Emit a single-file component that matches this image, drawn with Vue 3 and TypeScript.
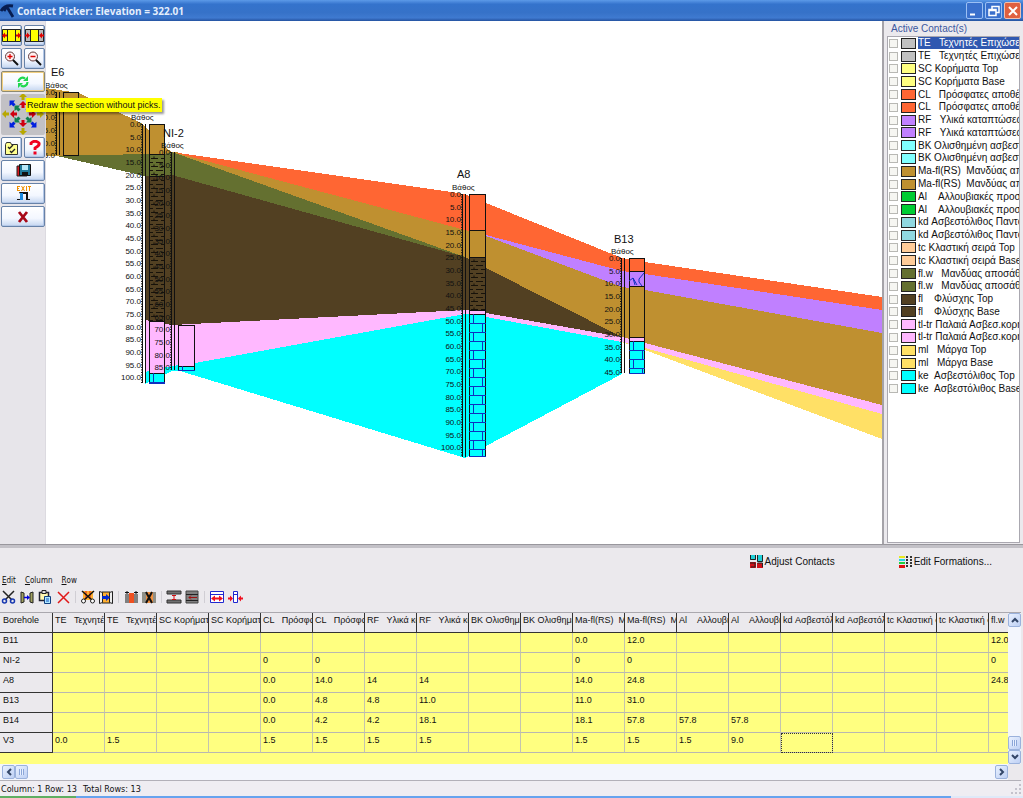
<script setup lang="ts">
interface Formation { label: string; color: string }
interface Hole {
  name: string; nameX: number; nameY: number
  depthX: number; x: number; top: number; bottom: number; last: number
}
interface Layer { x: number; y: number; w: number; h: number; fill: string; kind: string }

const formations: Formation[] = [
  { label: 'TE   Τεχνητές Επιχώσεις Top', color: '#c0c0c0' },
  { label: 'TE   Τεχνητές Επιχώσεις Base', color: '#c0c0c0' },
  { label: 'SC Κορήματα Top', color: '#ffff80' },
  { label: 'SC Κορήματα Base', color: '#ffff80' },
  { label: 'CL   Πρόσφατες αποθέσεις Top', color: '#ff6633' },
  { label: 'CL   Πρόσφατες αποθέσεις Base', color: '#ff6633' },
  { label: 'RF   Υλικά καταπτώσεων Top', color: '#c080ff' },
  { label: 'RF   Υλικά καταπτώσεων Base', color: '#c080ff' },
  { label: 'BK Ολισθημένη ασβεστολιθική Top', color: '#80ffff' },
  { label: 'BK Ολισθημένη ασβεστολιθική Base', color: '#80ffff' },
  { label: 'Ma-fl(RS)  Μανδύας αποσάθρωσης Top', color: '#bf9030' },
  { label: 'Ma-fl(RS)  Μανδύας αποσάθρωσης Base', color: '#bf9030' },
  { label: 'Al    Αλλουβιακές προσχώσεις Top', color: '#00cc33' },
  { label: 'Al    Αλλουβιακές προσχώσεις Base', color: '#00cc33' },
  { label: 'kd Ασβεστόλιθος Παντοκράτορα Top', color: '#90d8e0' },
  { label: 'kd Ασβεστόλιθος Παντοκράτορα Base', color: '#90d8e0' },
  { label: 'tc Κλαστική σειρά Top', color: '#ffcc99' },
  { label: 'tc Κλαστική σειρά Base', color: '#ffcc99' },
  { label: 'fl.w   Μανδύας αποσάθρωσης Top', color: '#647030' },
  { label: 'fl.w   Μανδύας αποσάθρωσης Base', color: '#647030' },
  { label: 'fl    Φλύσχης Top', color: '#524022' },
  { label: 'fl    Φλύσχης Base', color: '#524022' },
  { label: 'tl-tr Παλαιά Ασβεσ.κορήματα Top', color: '#ffb8ff' },
  { label: 'tl-tr Παλαιά Ασβεσ.κορήματα Base', color: '#ffb8ff' },
  { label: 'ml   Μάργα Top', color: '#ffe066' },
  { label: 'ml   Μάργα Base', color: '#ffe066' },
  { label: 'ke  Ασβεστόλιθος Top', color: '#00ffff' },
  { label: 'ke  Ασβεστόλιθος Base', color: '#00ffff' },
]
const headers = formations.slice(0, 19).map(f => f.label)

const rows: { id: string; v: Record<number, string> }[] = [
  { id: 'B11', v: { 10: '0.0', 11: '12.0', 18: '12.0' } },
  { id: 'NI-2', v: { 4: '0', 5: '0', 10: '0', 11: '0', 18: '0' } },
  { id: 'A8', v: { 4: '0.0', 5: '14.0', 6: '14', 7: '14', 10: '14.0', 11: '24.8', 18: '24.8' } },
  { id: 'B13', v: { 4: '0.0', 5: '4.8', 6: '4.8', 7: '11.0', 10: '11.0', 11: '31.0' } },
  { id: 'B14', v: { 4: '0.0', 5: '4.2', 6: '4.2', 7: '18.1', 10: '18.1', 11: '57.8', 12: '57.8', 13: '57.8' } },
  { id: 'V3', v: { 0: '0.0', 1: '1.5', 4: '1.5', 5: '1.5', 6: '1.5', 7: '1.5', 10: '1.5', 11: '1.5', 12: '1.5', 13: '9.0' } },
]

const bands = [
  { fill: '#bf9030', pts: '46,88 79,93 143,124 166,148 172,152 176,152 465,230 486,236 622,287 645,290 882,333 882,405 645,343 622,337 486,268 465,257 172,152 165,154 57,156 46,156' },
  { fill: '#ff6633', pts: '172,152 465,194 486,203 622,258 645,262 882,297 882,310 645,274 622,271 486,235 465,230 176,153' },
  { fill: '#c080ff', pts: '486,235 622,271 645,274 882,310 882,333 645,290 622,287 486,236' },
  { fill: '#647030', pts: '57,156 145,154 165,154 172,152 465,257 465,258 172,175 145,176' },
  { fill: '#524022', pts: '145,176 172,175 465,257 486,268 622,337 486,313 465,310 172,325 145,320' },
  { fill: '#ffb8ff', pts: '145,320 172,325 465,310 486,313 622,337 645,343 882,405 882,414 645,348 622,342 486,317 465,314 195,363 172,366 145,372' },
  { fill: '#00ffff', pts: '145,372 172,366 195,363 465,314 486,317 622,342 622,374 486,446 465,458 180,371 172,371 145,384' },
  { fill: '#ffe066', pts: '622,342 645,348 882,414 882,439 645,350' },
]

const holes: Hole[] = [
  { name: 'E6', nameX: 51, nameY: 76, depthX: 45, x: 56, top: 92, bottom: 155, last: 25 },
  { name: '', nameX: 0, nameY: 0, depthX: 131, x: 142, top: 124, bottom: 383, last: 100 },
  { name: 'NI-2', nameX: 163, nameY: 137, depthX: 161, x: 171, top: 152, bottom: 370, last: 85 },
  { name: 'A8', nameX: 457, nameY: 178, depthX: 452, x: 462, top: 194, bottom: 457, last: 100 },
  { name: 'B13', nameX: 614, nameY: 243, depthX: 611, x: 621, top: 258, bottom: 373, last: 45 },
]
const pitch = 12.66
const marks = (h: Hole) =>
  Array.from({ length: h.last / 5 + 1 }, (_, i) => ({ y: Math.round(h.top + i * pitch), t: (i * 5).toFixed(1) }))

const layers: Layer[] = [
  { x: 63, y: 92, w: 16, h: 63, fill: '#bf9030', kind: '' },
  { x: 149, y: 124, w: 16, h: 30, fill: '#bf9030', kind: '' },
  { x: 149, y: 154, w: 16, h: 22, fill: '#647030', kind: 'dash' },
  { x: 149, y: 176, w: 16, h: 145, fill: '#524022', kind: 'dash' },
  { x: 149, y: 321, w: 16, h: 52, fill: '#ffb8ff', kind: '' },
  { x: 149, y: 373, w: 16, h: 10, fill: '#00ffff', kind: 'brick' },
  { x: 178, y: 325, w: 17, h: 41, fill: '#ffb8ff', kind: '' },
  { x: 178, y: 366, w: 17, h: 4, fill: '#00ffff', kind: 'brick' },
  { x: 469, y: 194, w: 17, h: 36, fill: '#ff6633', kind: '' },
  { x: 469, y: 230, w: 17, h: 27, fill: '#bf9030', kind: '' },
  { x: 469, y: 257, w: 17, h: 53, fill: '#524022', kind: 'dash' },
  { x: 469, y: 310, w: 17, h: 4, fill: '#ffb8ff', kind: '' },
  { x: 469, y: 314, w: 17, h: 142, fill: '#00ffff', kind: 'brick' },
  { x: 629, y: 258, w: 16, h: 13, fill: '#ff6633', kind: '' },
  { x: 629, y: 271, w: 16, h: 15, fill: '#c080ff', kind: 'crack' },
  { x: 629, y: 286, w: 16, h: 51, fill: '#bf9030', kind: '' },
  { x: 629, y: 337, w: 16, h: 4, fill: '#ffb8ff', kind: '' },
  { x: 629, y: 341, w: 16, h: 32, fill: '#00ffff', kind: 'brick' },
]
function texture(l: Layer): string {
  let d = ''
  if (l.kind === 'brick') {
    for (let y = 0, i = 0; y < l.h; y += 9, i++) {
      const end = Math.min(y + 9, l.h)
      const vx = l.x + (i % 2 ? 13 : 4) + 0.5
      d += `M${vx} ${l.y + y}V${l.y + end}`
      d += `M${l.x} ${l.y + end + 0.5}h${l.w}`
    }
  } else if (l.kind === 'dash') {
    for (let y = 4, i = 0; y < l.h; y += 4, i++) {
      const base = l.y + y + 0.5
      d += i % 2 ? `M${l.x + 1} ${base}h3m3 0h7` : `M${l.x + 2} ${base}h7m3 0h4M${l.x + 5} ${base - 2}v2`
    }
  } else if (l.kind === 'crack') {
    d = `M${l.x} ${l.y + 10}l4 -3l4 7M${l.x + 4} ${l.y + 7}l2 7M${l.x + 15} ${l.y + 2}l-5 6v3l3 4`
  }
  return d
}
const arrows = [
  { a: 0, c: '#b8a800', r: 14 }, { a: 90, c: '#b8a800', r: 14 }, { a: 180, c: '#b8a800', r: 14 }, { a: 270, c: '#b8a800', r: 14 },
  { a: 45, c: '#0020e0', r: 12 }, { a: 135, c: '#0020e0', r: 12 }, { a: 225, c: '#0020e0', r: 12 }, { a: 315, c: '#0020e0', r: 12 },
  { a: 0, c: '#d00010', r: 6 }, { a: 90, c: '#d00010', r: 6 }, { a: 180, c: '#d00010', r: 6 }, { a: 270, c: '#d00010', r: 6 },
  { a: 45, c: '#108050', r: 5 }, { a: 135, c: '#108050', r: 5 }, { a: 225, c: '#108050', r: 5 }, { a: 315, c: '#108050', r: 5 },
]
</script>

<template>
  <div class="window">
    <header class="titlebar">
      <svg class="logo" width="15" height="16" viewBox="0 0 15 16"><path d="M1 8C3 4 7 2 13 3M7 4l6 10M6 4.500 4 8" fill="none" stroke="#071d50" stroke-width="2.800" /></svg>
      <h1>Contact Picker: Elevation = 322.01</h1>
      <button class="cap" aria-label="Minimize"><svg width="16" height="16"><path d="M3 11.500h5" stroke="#fff" stroke-width="2" /></svg></button>
      <button class="cap" aria-label="Restore"><svg width="16" height="16"><path d="M6 6V3.500h7v6h-3M3 6.500h7v6H3zM3 7.500h7" fill="none" stroke="#fff" stroke-width="1.500" /></svg></button>
      <button class="cap close" aria-label="Close"><svg width="16" height="16"><path d="M4 4l8 8M12 4l-8 8" stroke="#fff" stroke-width="2" /></svg></button>
    </header>

    <main class="work">
      <nav class="tools">
        <button aria-label="Widen"><svg width="19" height="13"><path d="M0 0h19v13H0z" fill="#ff0" /><path d="M.5 .5h18v12H.5zM5.500 0v13M13.500 0v13" fill="none" stroke="#222" /><path d="M0 6.500l3-3v2h2v2H3v2zM19 6.500l-3-3v2h-2v2h2v2z" fill="#e00000" /></svg></button>
        <button aria-label="Narrow"><svg width="19" height="13"><path d="M0 0h19v13H0z" fill="#b8b8b8" /><path d="M6 0h7v13H6z" fill="#ff0" /><path d="M.5 .5h18v12H.5zM5.500 0v13M13.500 0v13" fill="none" stroke="#222" /><path d="M5 6.500l-3-3v2H0v2h2v2zM14 6.500l3-3v2h2v2h-2v2z" fill="#e00000" /></svg></button>
        <button aria-label="Zoom in"><svg width="15" height="15"><circle cx="6" cy="5.500" r="4.500" fill="#fff0f0" stroke="#603838" /><path d="M3.500 5.500h5M6 3v5" stroke="#d00" stroke-width="1.300" /><path d="M9 9l5 5" stroke="#111" stroke-width="2" /></svg></button>
        <button aria-label="Zoom out"><svg width="15" height="15"><circle cx="6" cy="5.500" r="4.500" fill="#fff0f0" stroke="#603838" /><path d="M3.500 5.500h5" stroke="#d00" stroke-width="1.300" /><path d="M9 9l5 5" stroke="#111" stroke-width="2" /></svg></button>
        <button class="wide hot" aria-label="Redraw"><svg width="14" height="14"><path d="M2.500 7C2.500 3.500 6 1.500 9 3.500M11.500 7c0 3.500-3.500 5.500-6.500 3.500" fill="none" stroke="#20d850" stroke-width="2.200" /><path d="M7 6h5V1zM7 8H2v5z" fill="#20d850" /></svg></button>
        <button class="wide pan" aria-label="Pan">
          <svg width="42" height="41" viewBox="-21 -20 42 41">
            <path v-for="(p, i) in arrows" :key="i" :d="`M-1.500 ${-p.r}h3v-3h2.500l-4-4-4 4h2.500z`" :transform="`rotate(${p.a})`" :fill="p.c" />
          </svg>
        </button>
        <button aria-label="Options"><svg width="13" height="14"><path d="M.5 3.500l1-2h4l1 2h6v10H.5z" fill="#ffff90" stroke="#333" /><path d="M3 6l1.500 1.500L8 4M5 10l1.500 1.500L10 8" fill="none" stroke="#222" stroke-width="1.300" /></svg></button>
        <button aria-label="Help"><svg width="12" height="15"><path d="M2 5V3q4-3.500 8 0 1 2.500-4 5v2" fill="none" stroke="#f00020" stroke-width="2.800" /><path d="M4.500 11.500h3v3h-3z" fill="#f00020" /></svg></button>
        <button class="wide" aria-label="Save"><svg width="15" height="13"><path d="M1 2h10v10H1z" fill="#d81820" stroke="#222" /><path d="M3.500 .5h11v11h-11z" fill="#207898" stroke="#111" /><path d="M6 1h6v5H6z" fill="#b8e8f8" /><path d="M6 8h6v3H6z" fill="#111" /></svg></button>
        <button class="wide" aria-label="Exit">
          <svg width="15" height="15"><path d="M1 .5h3M1 2.500h2M1 4.500h3M1.500 0v5M5.500 0l3 5M8.500 0l-3 5M10.500 0v5M12 .5h3M13.500 0v5" stroke="#f09000" fill="none" /><path d="M3 6h9v7h2v1h-4V8H7v6H1v-1h3V8z" fill="#111" /><path d="M4 7h3v7H4z" fill="#1888e0" /></svg>
        </button>
        <button class="wide" aria-label="Cancel"><svg width="12" height="12"><path d="M2 1l8 10M10 1L2 11" stroke="#a80818" stroke-width="2.800" /></svg></button>
        <div class="tip" role="tooltip">Redraw the section without picks.</div>
      </nav>

      <section class="canvas">
        <svg class="section" viewBox="46 21 836 524" preserveAspectRatio="xMinYMin slice">
          <g shape-rendering="crispEdges"><polygon v-for="(b, i) in bands" :key="i" :points="b.pts" :fill="b.fill" /></g>
          <g v-for="(l, i) in layers" :key="'l' + i">
            <rect :x="l.x + 0.5" :y="l.y + 0.5" :width="l.w - 1" :height="l.h" :fill="l.fill" stroke="#111" />
            <path :d="texture(l)" fill="none" :stroke="l.kind === 'dash' ? '#17120a' : '#1030c0'" />
          </g>
          <g v-for="(h, i) in holes" :key="'h' + i">
            <path :d="`M${h.x + 0.5} ${h.top}V${h.bottom}M${h.x + 3.5} ${h.top}V${h.bottom}`" stroke="#111" />
            <path :d="`M${h.x - 0.5} ${h.top}V${h.bottom}`" stroke="#111" stroke-dasharray="1 1.530" />
            <text v-for="m in marks(h)" :key="m.t" class="mark" :x="h.x - 1" :y="m.y + 3" text-anchor="end">{{ m.t }}</text>
            <text class="mark" :x="h.depthX" :y="h.top - 4">Βάθος</text>
            <text v-if="h.name" class="name" :x="h.nameX" :y="h.nameY">{{ h.name }}</text>
          </g>
        </svg>
      </section>

      <aside class="legend">
        <h2>Active Contact(s)</h2>
        <div class="listbox">
          <ul>
            <li v-for="(f, i) in formations" :key="i">
              <label :class="{ on: i === 0 }">
                <input type="checkbox"><span class="swatch" :style="{ background: f.color }"></span><span class="caption">{{ f.label }}</span>
              </label>
            </li>
          </ul>
        </div>
      </aside>
    </main>

    <section class="lower">
      <div class="actions">
        <button><svg width="13" height="13"><path d="M0 0h6v5H0zM7 0h6v7H7z" fill="#20d0d8" /><path d="M0 7h6v6H0zM7 8h6v5H7z" fill="#d01018" /><path d="M.5 0v4.500h5V0M7.500 0v6.500h5V0M0 8h5v4H1M7.500 8h5v4" fill="none" stroke="#222" /></svg>Adjust Contacts</button>
        <button><svg width="13" height="13"><path d="M0 1h6v2H0z" fill="#e8e820" /><path d="M0 4h6v2H0z" fill="#20d8e8" /><path d="M0 7h6v2H0z" fill="#20d040" /><path d="M0 10h6v3H0z" fill="#e01010" /><path d="M7 2h2m2 0h2M7 5h2m2 0h2M7 8h2m2 0h2M7 11h2m2 0h2" stroke="#333" stroke-width="2" /></svg>Edit Formations...</button>
      </div>
      <nav class="menu"><button><u>E</u>dit</button><button><u>C</u>olumn</button><button><u>R</u>ow</button></nav>
      <div class="strip">
        <button aria-label="Cut"><svg width="16" height="16"><path d="M2 2l9 9M13 2l-9 9" stroke="#222" stroke-width="1.500" /><circle cx="3.500" cy="12" r="2" fill="none" stroke="#1838b0" stroke-width="1.500" /><circle cx="11.500" cy="12" r="2" fill="none" stroke="#1838b0" stroke-width="1.500" /></svg></button>
        <button aria-label="Copy"><svg width="16" height="16"><path d="M2 3l3 1v9l-3 1zM14 3l-3 1v9l3 1z" fill="#a0a060" stroke="#222" /><path d="M5 8.500h4" stroke="#00d" stroke-width="1.500" /><path d="M8 6l3 2.500L8 11z" fill="#00d" /></svg></button>
        <button aria-label="Paste"><svg width="16" height="16"><path d="M2.500 3.500h9v8h-9z" fill="#fff8b0" stroke="#223" stroke-width="1.500" /><path d="M5 1.500h4v3H5z" fill="#ddd" stroke="#222" /><path d="M7.500 7.500h6v7h-6z" fill="#b0e8ff" stroke="#124080" /><path d="M9 10h3M9 12h3" stroke="#1050c0" /></svg></button>
        <button aria-label="Delete"><svg width="16" height="16"><path d="M3 3l11 11M14 3L3 14" stroke="#e01818" stroke-width="1.500" /></svg></button>
        <i></i>
        <button aria-label="Cut column"><svg width="16" height="16"><path d="M3 2h10v9H3z" fill="#ffb030" /><path d="M5 2h2v8H5zM9 2h2v8H9z" fill="#f06820" /><path d="M2 2l10 9M14 2L4 11" stroke="#111" stroke-width="1.500" /><circle cx="3.500" cy="12" r="2" fill="#fff" stroke="#222" /><circle cx="12.500" cy="12" r="2" fill="#fff" stroke="#222" /></svg></button>
        <button aria-label="Paste column"><svg width="16" height="16"><path d="M4 3h8v11H4z" fill="#ffb030" /><path d="M4.500 3.500l-3-1v12l3-1zM11.500 3.500l3-1v12l-3-1z" fill="#eee" stroke="#222" /><path d="M4 3h8M4 14h8" stroke="#222" /><path d="M4 7h4V5l4 3.500L8 12v-2H4z" fill="#0028d0" /></svg></button>
        <i></i>
        <button aria-label="Insert column"><svg width="16" height="16"><path d="M2 5h4v9H2zM11 5h4v9h-4z" fill="#808080" /><path d="M6 4h5v10H6z" fill="#f05020" /><path d="M2 3.500h4M11 3.500h4M4 2v3M13 2v3" stroke="#111" /></svg></button>
        <button aria-label="Delete column"><svg width="16" height="16"><path d="M1 3h4v11H1zM12 3h3v11h-3z" fill="#909088" /><path d="M5 3h7v11H5z" fill="#f09040" /><path d="M5 3l6 11M11 3L5 14" stroke="#111" stroke-width="2" /></svg></button>
        <i></i>
        <button aria-label="Insert row"><svg width="16" height="16"><path d="M1 2h14v3H1zM1 11h14v3H1z" fill="#707070" stroke="#333" /><path d="M8 6v5M6 6.500h4M6 10.500h4" stroke="#d01010" /></svg></button>
        <button aria-label="Delete row"><svg width="16" height="16"><path d="M2 2h12v12H2z" fill="#808080" stroke="#444" /><path d="M2 5.500h12M2 11.500h12" stroke="#222" /><path d="M5 8.500h8M7 6.500l-2 2 2 2" stroke="#a01010" fill="none" /></svg></button>
        <i></i>
        <button aria-label="Fit width"><svg width="16" height="16"><path d="M1.500 2.500h13v11h-13zM1 5.500h14" fill="#fff" stroke="#2028d0" /><path d="M2 9.500l4-3v2h4v-2l4 3-4 3v-2H6v2z" fill="#f01020" /></svg></button>
        <button aria-label="Fit column"><svg width="16" height="16"><path d="M6.500 2.500h4v11h-4zM6 5.500h5" fill="#fff" stroke="#2028d0" /><path d="M6 9.500l-3-3v2H1v2h2v2zM11 9.500l3-3v2h2v2h-2v2z" fill="#f01020" /></svg></button>
      </div>

      <div class="grid">
        <div class="sheet">
          <table>
            <thead><tr><th scope="col">Borehole</th><th v-for="(t, i) in headers" :key="i" scope="col">{{ t }}</th></tr></thead>
            <tbody>
              <tr v-for="r in rows" :key="r.id">
                <th scope="row">{{ r.id }}</th>
                <td v-for="(_, i) in headers" :key="i" :class="{ focus: r.id === 'V3' && i === 14 }">{{ r.v[i] ?? '' }}</td>
              </tr>
            </tbody>
          </table>
        </div>
        <div class="vbar">
          <button aria-label="Scroll up"><svg width="8" height="8"><path d="M1 6l3-3 3 3" /></svg></button>
          <span class="space"></span>
          <span class="thumb"></span>
          <button aria-label="Scroll down"><svg width="8" height="8"><path d="M1 2l3 3 3-3" /></svg></button>
        </div>
        <div class="hbar">
          <button aria-label="Scroll left"><svg width="8" height="8"><path d="M6 1L3 4l3 3" /></svg></button>
          <span class="thumb"></span>
          <span class="space"></span>
          <button aria-label="Scroll right"><svg width="8" height="8"><path d="M2 1l3 3-3 3" /></svg></button>
        </div>
      </div>
    </section>
    <footer class="status"><span>Column: 1 Row: 13</span><span>Total Rows: 13</span>
      <svg class="grip" width="10" height="10"><path d="M8 1h2M8 5h2M8 9h2M4 5h2M4 9h2M0 9h2" stroke="#c4c2cc" stroke-width="2" /></svg>
    </footer>
    <div class="edge"><span></span><b></b></div>
  </div>
</template>

<style>
html, body { height: 100%; overflow: hidden; }
body { margin: 0; }
</style>

<style scoped>
* { box-sizing: border-box; }
button { font: inherit; color: inherit; border: 0; padding: 0; margin: 0; background: none; display: flex; align-items: center; justify-content: center; }
.window { height: 100vh; display: flex; flex-direction: column; background: #ebe9ed; font: 9px/12px "Liberation Sans", Arial, sans-serif; color: #111; overflow: hidden; }
.titlebar { height: 21px; flex: none; display: flex; align-items: center; gap: 2px; padding: 0 2px 0 0; background: linear-gradient(#5c9ae8, #3473cc 20%, #3672c8 60%, #3f7ad0 85%, #2452a0); }
h1 { flex: 1; margin: 0; font: bold 10px/20px "Open Sans", "Noto Sans", sans-serif; color: #e4eefc; }
.cap { width: 17px; height: 17px; border: 1px solid #9cc0f4; border-radius: 2px; background: #3a70cc; }
.cap.close { background: #e06040; border-color: #f0c0b0; }
.work { flex: 1; min-height: 0; display: flex; border-bottom: 1px solid #99979d; }
.tools { position: relative; flex: none; width: 46px; padding: 4px 1px 0; display: grid; grid-template-columns: 21px 21px; grid-auto-rows: 21px; grid-template-rows: 21px 21px 21px 41px; gap: 2px; background: #e7e5ea; border-right: 1px solid #dcdae0; align-content: start; }
.tools button { border: 1px solid #6782a8; border-radius: 2px; background: linear-gradient(#fff, #f3f7ff 60%, #c5d6f0); box-shadow: inset -1px -1px #b4c8e8; overflow: hidden; }
.tools .wide { grid-column: 1 / 3; }
.tools .hot { border-color: #8d8a70; box-shadow: inset 0 0 0 1px #f2cf80; }
.tools .pan { background: #c2c1c5; border: 0; box-shadow: none; }
.tip { position: absolute; left: 26px; top: 77px; z-index: 2; padding: 0 1px; background: #ffff00; font: 9px/14px "Liberation Sans", Arial, sans-serif; white-space: nowrap; box-shadow: 2px 2px 2px #0006; }
.canvas { flex: 1; min-width: 0; display: flex; background: #fff; overflow: hidden; }
.section { display: block; width: 100%; height: 100%; }
.mark { font-size: 8px; fill: #111; }
.name { font-size: 11px; fill: #111; }
.legend { flex: none; width: 141px; padding: 0 3px 1px 3px; display: flex; flex-direction: column; border-left: 2px solid #a5a3a9; background: #ebe9ed; }
h2 { margin: 0; padding: 0 4px; font: 10px/15px "Liberation Sans", Arial, sans-serif; color: #3c58a0; }
.listbox { flex: 1; min-height: 0; padding-left: 1px; background: #fff; border: 1px solid #aaa8b0; overflow: hidden; }
ul { list-style: none; margin: 0; padding: 0; height: 358px; display: grid; grid-auto-rows: 1fr; }
li { min-height: 0; min-width: 0; }
label { display: flex; align-items: center; height: 100%; gap: 2px; }
input { appearance: none; flex: none; width: 9px; height: 9px; margin: 0 1px 0 0; border: 1px solid #b8b8b4; background: #f6f6f2; }
.swatch { flex: none; width: 15px; height: 11px; border: 1px solid #222; }
.caption { flex: 1; min-width: 0; overflow: hidden; white-space: pre; font-size: 10px; line-height: 12px; }
.on .caption { background: #3058b0; color: #fff; }
.lower { flex: none; border-top: 3px solid #c3c1c7; }
.actions { display: flex; justify-content: flex-end; gap: 64px; padding: 7px 31px 0 0; font-size: 10px; }
.actions button { gap: 2px; height: 13px; }
.menu { display: flex; gap: 9px; padding: 7px 2px 0; }
.menu button { height: 12px; font-family: "DejaVu Sans Condensed", "Noto Sans", sans-serif; font-size: 8px; }
.strip { display: flex; align-items: center; gap: 2px; height: 18px; padding-left: 1px; margin: 1px 0 6px; }
.strip button { width: 16px; height: 16px; }
.strip i { width: 1px; height: 12px; margin: 0 2px; background: #d0ced4; }
.grid { display: grid; grid-template-columns: 1fr 13px; grid-template-rows: auto 16px; margin-right: 2px; border-top: 1px solid #aaa8ae; border-bottom: 1px solid #b2b0b8; }
.sheet { overflow: hidden; min-width: 0; background: #ffff80; padding-bottom: 11px; }
table { border-collapse: separate; border-spacing: 0; table-layout: fixed; width: 1041px; }
th, td { height: 20px; padding: 1px 0 0 2px; overflow: hidden; white-space: pre; text-align: left; vertical-align: top; font-weight: normal; line-height: 12px; }
td { border-right: 1px solid #c4c4ae; border-bottom: 1px solid #b9b8b0; width: 52px; }
th { width: 52px; background: #ebe9ed; border-right: 1px solid #333; border-bottom: 1px solid #333; }
th:first-child { width: 53px; padding-left: 3px; }
td.focus { outline: 1px dotted #333; outline-offset: -1px; }
.vbar, .hbar { display: flex; background: #f3f6fd; }
.vbar { flex-direction: column; }
.hbar { padding: 1px 0 1px 2px; }
.vbar button, .hbar button, .thumb { flex: none; width: 13px; height: 14px; border: 1px solid #9bb2dc; border-radius: 2px; background: linear-gradient(135deg, #e9f1ff, #bed0f4); }
.vbar svg path, .hbar svg path { fill: none; stroke: #334668; stroke-width: 2; }
.space { flex: 1; }
.thumb::before { content: ""; display: block; width: 5px; height: 6px; margin: 3px; background: repeating-linear-gradient(90deg, #8ba6d8 0 1px, #e8f0ff 1px 2px); }
.status { flex: none; height: 15px; display: flex; gap: 6px; align-items: center; padding: 0 2px 0 1px; font-family: "DejaVu Sans Condensed", "Noto Sans", sans-serif; font-size: 9px; background: #efedf2; white-space: nowrap; }
.grip { margin-left: auto; }
.edge { flex: none; height: 2px; display: flex; background: #dfe9f8; }
.edge span { flex: 0 0 76px; background: #5fae62; }
.edge b { flex: 0 0 875px; background: #67a3ee; }
</style>
